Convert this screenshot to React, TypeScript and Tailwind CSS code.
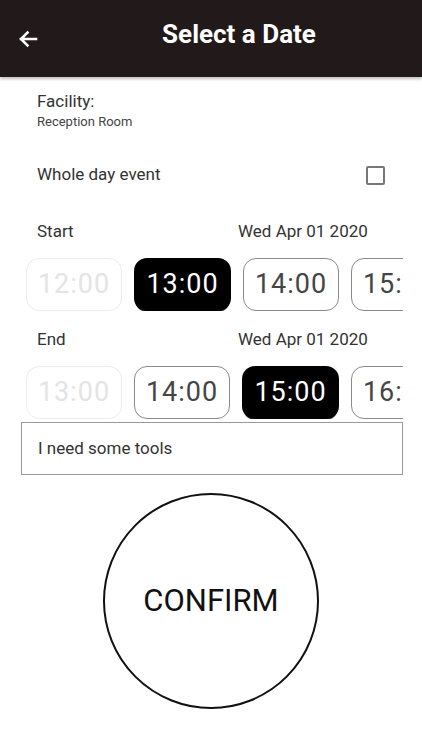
import React, { useState } from 'react';

const startTimes = ['12:00', '13:00', '14:00', '15:00'];
const endTimes = ['13:00', '14:00', '15:00', '16:00'];

const TimeRow = ({
  times,
  selected,
  disabled
}: {
  times: string[];
  selected: string;
  disabled: string;
}) => (
  <div className="ml-[26px] w-[377px] overflow-hidden">
    <div className="flex gap-[12px]">
      {times.map((t) => {
        const isSel = t === selected;
        const isOff = t === disabled;
        return (
          <div
            key={t}
            className={
              isSel
                ? 'flex h-[53px] w-[97px] shrink-0 items-center justify-center rounded-[13px] bg-black text-[27px] tracking-[1px] text-white shadow-[0_2px_0_-1px_#444]'
                : isOff
                  ? 'flex h-[53px] w-[96px] shrink-0 items-center justify-center rounded-[13px] border border-[#ececec] text-[27px] tracking-[1px] text-[#e4e4e4]'
                  : 'flex h-[53px] w-[96px] shrink-0 items-center justify-center rounded-[13px] border border-[#8a8a8a] text-[27px] tracking-[1px] text-[#454545]'
            }
          >
            {t}
          </div>
        );
      })}
    </div>
  </div>
);

const DateRow = ({ label }: { label: string }) => (
  <div className="flex h-[20px] items-center pl-[37px] text-[17px] text-[#333]">
    <span className="w-[201px]">{label}</span>
    <span>Wed Apr 01 2020</span>
  </div>
);

export default function App() {
  const [wholeDay, setWholeDay] = useState(false);
  const [note, setNote] = useState('I need some tools');

  return (
    <div className="h-[750px] w-[422px] overflow-hidden bg-white font-['Roboto',sans-serif]">
      <div className="relative z-10 flex h-[77px] items-center bg-[#221a1a] shadow-[0_2px_3px_rgba(0,0,0,0.25)]">
        <button className="flex w-[56px] justify-center">
          <svg width="24" height="24" viewBox="0 0 24 24" fill="none">
            <path
              d="M20 12H5M11.5 5.5L5 12l6.5 6.5"
              stroke="white"
              strokeWidth="2.6"
              strokeLinecap="square"
            />
          </svg>
        </button>
        <h1 className="flex-1 pb-[8px] text-center text-[26px] font-bold text-white">
          Select a Date
        </h1>
      </div>

      <div className="pl-[37px] pt-[14px]">
        <div className="h-[20px] text-[17px] leading-[20px] text-[#333]">Facility:</div>
        <div className="mt-[3px] h-[15px] text-[13px] leading-[15px] text-[#444]">
          Reception Room
        </div>
      </div>

      <div className="mt-[34px] flex h-[24px] items-center justify-between pl-[37px] pr-[37px]">
        <span className="text-[17px] text-[#333]">Whole day event</span>
        <button
          onClick={() => setWholeDay(!wholeDay)}
          className="flex h-[19px] w-[19px] items-center justify-center rounded-[2px] border-2 border-[#777]"
        >
          {wholeDay && <span className="h-[9px] w-[9px] bg-[#777]" />}
        </button>
      </div>

      <div className="mt-[35px]">
        <DateRow label="Start" />
      </div>
      <div className="mt-[16px]">
        <TimeRow times={startTimes} selected="13:00" disabled="12:00" />
      </div>

      <div className="mt-[19px]">
        <DateRow label="End" />
      </div>
      <div className="mt-[16px]">
        <TimeRow times={endTimes} selected="15:00" disabled="13:00" />
      </div>

      <div className="ml-[21px] mt-[3px] flex h-[53px] w-[382px] items-center border border-[#9a9a9a] px-[16px]">
        <input
          value={note}
          onChange={(e) => setNote(e.target.value)}
          className="w-full bg-transparent text-[17px] text-[#333] outline-none"
        />
      </div>

      <div className="mt-[18px] flex justify-center">
        <button className="flex h-[216px] w-[216px] items-center justify-center rounded-full border-2 border-[#111] text-[31px] text-[#111]">
          CONFIRM
        </button>
      </div>
    </div>
  );
}
